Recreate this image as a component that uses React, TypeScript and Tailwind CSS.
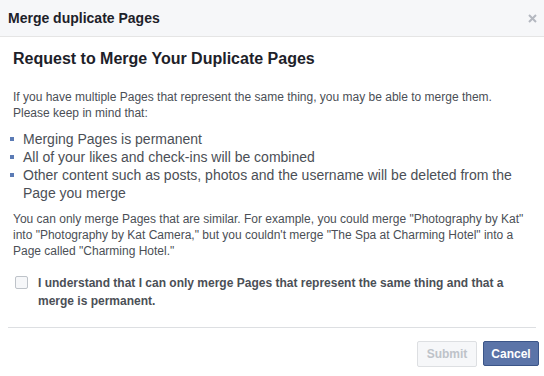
export default function App() {
  return (
    <div className="w-[544px] h-[376px] bg-white font-['Liberation_Sans',Arial,sans-serif] text-[#4b4f56]">
      {/* Dialog header */}
      <div className="h-[37px] bg-[#f6f7f9] border-b border-[#e5e5e5] flex items-center justify-between pl-2 pr-[7px]">
        <span className="text-[14px] font-bold text-[#1d2129]">Merge duplicate Pages</span>
        <svg width="9" height="9" viewBox="0 0 9 9" className="mt-px">
          <path d="M1 1L8 8M8 1L1 8" stroke="#b4b8c0" strokeWidth="2" />
        </svg>
      </div>

      <div className="px-[13px] pt-[12px]">
        <h2 className="text-[16px] leading-5 font-bold text-[#1d2129]">
          Request to Merge Your Duplicate Pages
        </h2>

        <p className="mt-[20px] text-[12px] leading-4">
          If you have multiple Pages that represent the same thing, you may be able to merge them.
          <br />
          Please keep in mind that:
        </p>

        <ul className="mt-[9px] text-[14px] leading-[18px]">
          {[
            "Merging Pages is permanent",
            "All of your likes and check-ins will be combined",
            "Other content such as posts, photos and the username will be deleted from the Page you merge",
          ].map((item) => (
            <li key={item} className="flex">
              <span className="w-[4px] h-[4px] bg-[#5b7bb5] mt-[7px] ml-[-3px] mr-[9px] shrink-0" />
              <span>{item}</span>
            </li>
          ))}
        </ul>

        <p className="mt-[9px] text-[12px] leading-4">
          You can only merge Pages that are similar. For example, you could merge "Photography by Kat"
          into "Photography by Kat Camera," but you couldn't merge "The Spa at Charming Hotel" into a
          Page called "Charming Hotel."
        </p>

        <label className="mt-[15px] flex gap-[10px] pl-[2px]">
          <span className="mt-[2px] w-[13px] h-[13px] rounded-[2px] border border-[#bec3c9] bg-[#f6f7f9] shrink-0" />
          <span className="text-[12px] leading-[18px] font-bold">
            I understand that I can only merge Pages that represent the same thing and that a
            merge is permanent.
          </span>
        </label>
      </div>

      <div className="mx-2 mt-[17px] border-t border-[#dddfe2]" />

      {/* Footer buttons */}
      <div className="flex justify-end gap-[6px] pr-[5px] mt-[13px]">
        <button className="h-[26px] w-[60px] rounded-[2px] border border-[#dddfe2] bg-[#f6f7f9] text-[12px] font-bold text-[#bec3c9]">
          Submit
        </button>
        <button className="h-[25px] w-[56px] rounded-[2px] border border-[#3b5588] bg-[#5b74a8] text-[12px] font-bold text-white">
          Cancel
        </button>
      </div>
    </div>
  );
}
